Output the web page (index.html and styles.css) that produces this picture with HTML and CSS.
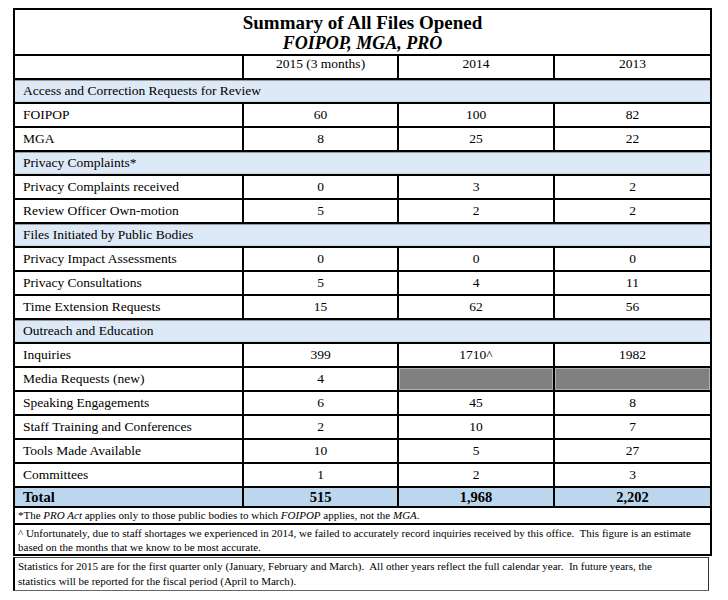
FILE: index.html
```html
<!DOCTYPE html>
<html>
<head>
<meta charset="utf-8">
<link rel="stylesheet" href="styles.css">
</head>
<body>
<div class="page">
<table class="summary">
  <colgroup>
    <col class="c1"><col class="c2"><col class="c3"><col class="c4">
  </colgroup>
  <tr class="title-row">
    <td colspan="4">
      <div class="title">Summary of All Files Opened</div>
      <div class="subtitle">FOIPOP, MGA, PRO</div>
    </td>
  </tr>
  <tr class="head">
    <td></td><td>2015 (3 months)</td><td>2014</td><td>2013</td>
  </tr>
  <tr class="section"><td colspan="4">Access and Correction Requests for Review</td></tr>
  <tr><td>FOIPOP</td><td>60</td><td>100</td><td>82</td></tr>
  <tr><td>MGA</td><td>8</td><td>25</td><td>22</td></tr>
  <tr class="section"><td colspan="4">Privacy Complaints*</td></tr>
  <tr><td>Privacy Complaints received</td><td>0</td><td>3</td><td>2</td></tr>
  <tr><td>Review Officer Own-motion</td><td>5</td><td>2</td><td>2</td></tr>
  <tr class="section"><td colspan="4">Files Initiated by Public Bodies</td></tr>
  <tr><td>Privacy Impact Assessments</td><td>0</td><td>0</td><td>0</td></tr>
  <tr><td>Privacy Consultations</td><td>5</td><td>4</td><td>11</td></tr>
  <tr><td>Time Extension Requests</td><td>15</td><td>62</td><td>56</td></tr>
  <tr class="section"><td colspan="4">Outreach and Education</td></tr>
  <tr><td>Inquiries</td><td>399</td><td>1710^</td><td>1982</td></tr>
  <tr><td>Media Requests (new)</td><td>4</td><td class="na"></td><td class="na"></td></tr>
  <tr><td>Speaking Engagements</td><td>6</td><td>45</td><td>8</td></tr>
  <tr><td>Staff Training and Conferences</td><td>2</td><td>10</td><td>7</td></tr>
  <tr><td>Tools Made Available</td><td>10</td><td>5</td><td>27</td></tr>
  <tr><td>Committees</td><td>1</td><td>2</td><td>3</td></tr>
  <tr class="total"><td>Total</td><td>515</td><td>1,968</td><td>2,202</td></tr>
  <tr class="note"><td colspan="4">*The <i>PRO Act</i> applies only to those public bodies to which <i>FOIPOP</i> applies, not the <i>MGA</i>.</td></tr>
  <tr class="note note2"><td colspan="4">^ Unfortunately, due to staff shortages we experienced in 2014, we failed to accurately record inquiries received by this office.&nbsp; This figure is an estimate based on the months that we know to be most accurate.</td></tr>
</table>
<div class="stats">Statistics for 2015 are for the first quarter only (January, February and March).&nbsp; All other years reflect the full calendar year.&nbsp; In future years, the statistics will be reported for the fiscal period (April to March).</div>
</div>
</body>
</html>
```
FILE: styles.css
```css
html, body {
  margin: 0;
  padding: 0;
  background: #ffffff;
}
body {
  font-family: "Liberation Serif", "DejaVu Serif", serif;
  color: #000;
}
.page {
  padding: 8px 0 0 13px;
  width: 697px;
}
.summary {
  width: 697px;
  border-collapse: collapse;
  table-layout: fixed;
  border: 2px solid #000;
}
.c1 { width: 229px; }
.c2 { width: 155px; }
.c3 { width: 156px; }
.c4 { width: 157px; }
.summary td {
  border: 2px solid #000;
  height: 22px;
  padding: 0 8px;
  font-size: 13.5px;
  line-height: 16px;
  text-align: center;
  white-space: nowrap;
}
.summary td:first-child {
  text-align: left;
}
.title-row td {
  text-align: center !important;
  height: 44px;
  padding: 0;
  vertical-align: middle;
}
.title {
  font-weight: bold;
  font-size: 19px;
  line-height: 21px;
}
.subtitle {
  font-weight: bold;
  font-style: italic;
  font-size: 18px;
  line-height: 20px;
}
.head td {
  vertical-align: top;
  padding-top: 0;
}
.section td {
  background: #dde9f6;
  text-align: left;
  box-shadow: inset 0 1px 0 #9a9a9a, inset 0 -1px 0 #c7d3df;
}
.na {
  background: #808080;
  box-shadow: inset 0 0 0 1px #b0b0b0;
}
.total td {
  background: #bcd6ee;
  font-weight: bold;
  font-size: 14.5px;
  line-height: 18px;
  height: 18px;
}
.note td {
  font-size: 11px;
  line-height: 15px;
  height: 15px;
  text-align: left;
  white-space: normal;
  padding: 0 3px;
  vertical-align: top;
}
.note2 td {
  height: 26px;
  line-height: 14px;
  padding-top: 1px;
}
.stats {
  margin-top: 1px;
  border: 2px solid #000;
  border-top: 1px solid #444;
  border-right: 1px solid #333;
  border-bottom: 1px solid #666;
  width: 650px;
  padding: 1px 40px 1px 3px;
  font-size: 11px;
  line-height: 15px;
}
```
